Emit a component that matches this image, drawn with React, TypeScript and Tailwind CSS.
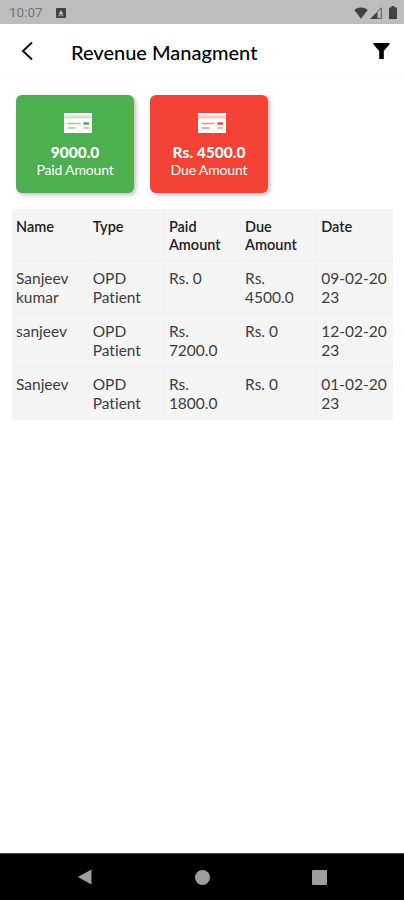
const SUMMARY = [
  { id: "paid", amount: "9000.0", label: "Paid Amount", color: "bg-[#4caf50]", ink: "#4caf50" },
  { id: "due", amount: "Rs. 4500.0", label: "Due Amount", color: "bg-[#f44336]", ink: "#f44336" },
];

const COLUMNS = ["Name", "Type", "Paid Amount", "Due Amount", "Date"];

const ROWS = [
  ["Sanjeev kumar", "OPD Patient", "Rs. 0", "Rs. 4500.0", "09-02-2023"],
  ["sanjeev", "OPD Patient", "Rs. 7200.0", "Rs. 0", "12-02-2023"],
  ["Sanjeev", "OPD Patient", "Rs. 1800.0", "Rs. 0", "01-02-2023"],
];

function StatusBar() {
  return (
    <div className="flex h-6 shrink-0 items-center bg-[#bdbdbd] pl-[9px] pr-[7px] pt-px font-['Roboto',sans-serif] text-[13.5px] text-[#757575]">
      <span className="w-[34px] whitespace-nowrap">10:07</span>
      <svg className="ml-[13px]" width="10" height="10" viewBox="0 0 10 10">
        <rect width="10" height="10" rx="1" fill="#424242" />
        <path d="M5 2 7.5 6.5h-5Z" fill="#bdbdbd" />
        <path d="M2.3 7.7h5.4" stroke="#bdbdbd" strokeWidth="0.8" />
      </svg>
      <svg className="ml-auto" width="14" height="12" viewBox="0 0 14 12">
        <path d="M0.3 2.9C4.2-.2 9.8-.2 13.7 2.9L7 11.8Z" fill="#424242" />
      </svg>
      <svg className="ml-[2px]" width="12" height="12" viewBox="0 0 12 12">
        <path d="M0 12 7.5 4.5V12Z" fill="#424242" />
        <path d="M7.5 4.5 11.3.9V11.4H7.5" fill="none" stroke="#555" strokeWidth="1" />
      </svg>
      <svg className="ml-[7px]" width="8" height="13" viewBox="0 0 8 13">
        <path d="M2.5 0h3v1.5H8V13H0V1.5h2.5Z" fill="#424242" />
      </svg>
    </div>
  );
}

function Header() {
  return (
    <header className="flex h-[55px] shrink-0 items-center border-b border-[#fafafa] pl-[21px] pr-[14px]">
      <svg width="13" height="20" viewBox="0 0 13 20">
        <path d="M11 1.5 2 10l9 8.5" fill="none" stroke="#111" strokeWidth="2" />
      </svg>
      <h1 className="ml-[37px] mt-px whitespace-nowrap text-[20px] font-medium leading-6 text-black">
        Revenue Managment
      </h1>
      <svg className="ml-auto" width="17" height="16" viewBox="0 0 17 16">
        <path d="M.5 0h16v1.4L10.8 8v8H6.2V8L.5 1.4Z" fill="#000" />
      </svg>
    </header>
  );
}

function CardIcon({ ink }: { ink: string }) {
  return (
    <svg className="ml-[5px]" width="28" height="20" viewBox="0 0 28 20">
      <rect width="28" height="20" fill="#fff" />
      <rect y="2.5" width="28" height="3" fill={ink} opacity="0.3" />
      <path d="M3.5 10.5h13M3.5 15h8M19.5 15h5.5" stroke={ink} strokeWidth="1.5" opacity="0.6" />
      <path d="M19.5 10.5h5.5" stroke={ink} strokeWidth="2.5" />
    </svg>
  );
}

export default function App() {
  return (
    <div className="flex h-[900px] w-[404px] flex-col bg-white font-['Lato',sans-serif] [font-variant-ligatures:none]">
      <StatusBar />
      <Header />

      <main className="flex-1">
        {/* Totals */}
        <div className="flex gap-4 px-4 pt-4">
          {SUMMARY.map((item) => (
            <div
              key={item.id}
              className={`flex h-[98px] w-[118px] flex-col items-center rounded-md pt-[18px] text-white shadow-[2px_2px_4px_rgba(0,0,0,0.25)] ${item.color}`}
            >
              <CardIcon ink={item.ink} />
              <span className="mt-[10px] text-[15.5px] font-black leading-[18px]">{item.amount}</span>
              <span className="text-[14px] leading-[17px] tracking-[-0.15px]">{item.label}</span>
            </div>
          ))}
        </div>

        {/* Payments */}
        <table className="ml-3 mt-4 w-[381px] table-fixed border-collapse bg-[#f5f5f5] text-left">
          <thead>
            <tr className="h-[51px] border-b border-[#eeeeee]">
              {COLUMNS.map((column) => (
                <th
                  key={column}
                  className="border-r border-[#f2f2f2] px-1 pt-[9px] align-top text-[14.5px] font-semibold leading-[18px] text-[#212121] last:border-r-0"
                >
                  {column}
                </th>
              ))}
            </tr>
          </thead>
          <tbody>
            {ROWS.map((row) => (
              <tr key={row[4]} className="h-[53px] border-b border-[#eeeeee] last:h-[54px] last:border-b-0">
                {row.map((cell, i) => (
                  <td
                    key={COLUMNS[i]}
                    className="border-r border-[#f2f2f2] px-1 pt-[8px] align-top text-[15.5px] leading-[19px] text-[#3d3d3d] last:break-all last:border-r-0"
                  >
                    {cell}
                  </td>
                ))}
              </tr>
            ))}
          </tbody>
        </table>
      </main>

      {/* System navigation */}
      <nav className="flex h-[47px] shrink-0 items-center justify-between border-t border-[#444] bg-black pl-[77px] pr-[77px]">
        <svg width="15" height="16" viewBox="0 0 15 16">
          <path d="M14.5.5v15L.8 8Z" fill="#9e9e9e" />
        </svg>
        <div className="h-[15px] w-[15px] rounded-full bg-[#9e9e9e]" />
        <div className="h-[15px] w-[15px] rounded-[1px] bg-[#9e9e9e]" />
      </nav>
    </div>
  );
}
